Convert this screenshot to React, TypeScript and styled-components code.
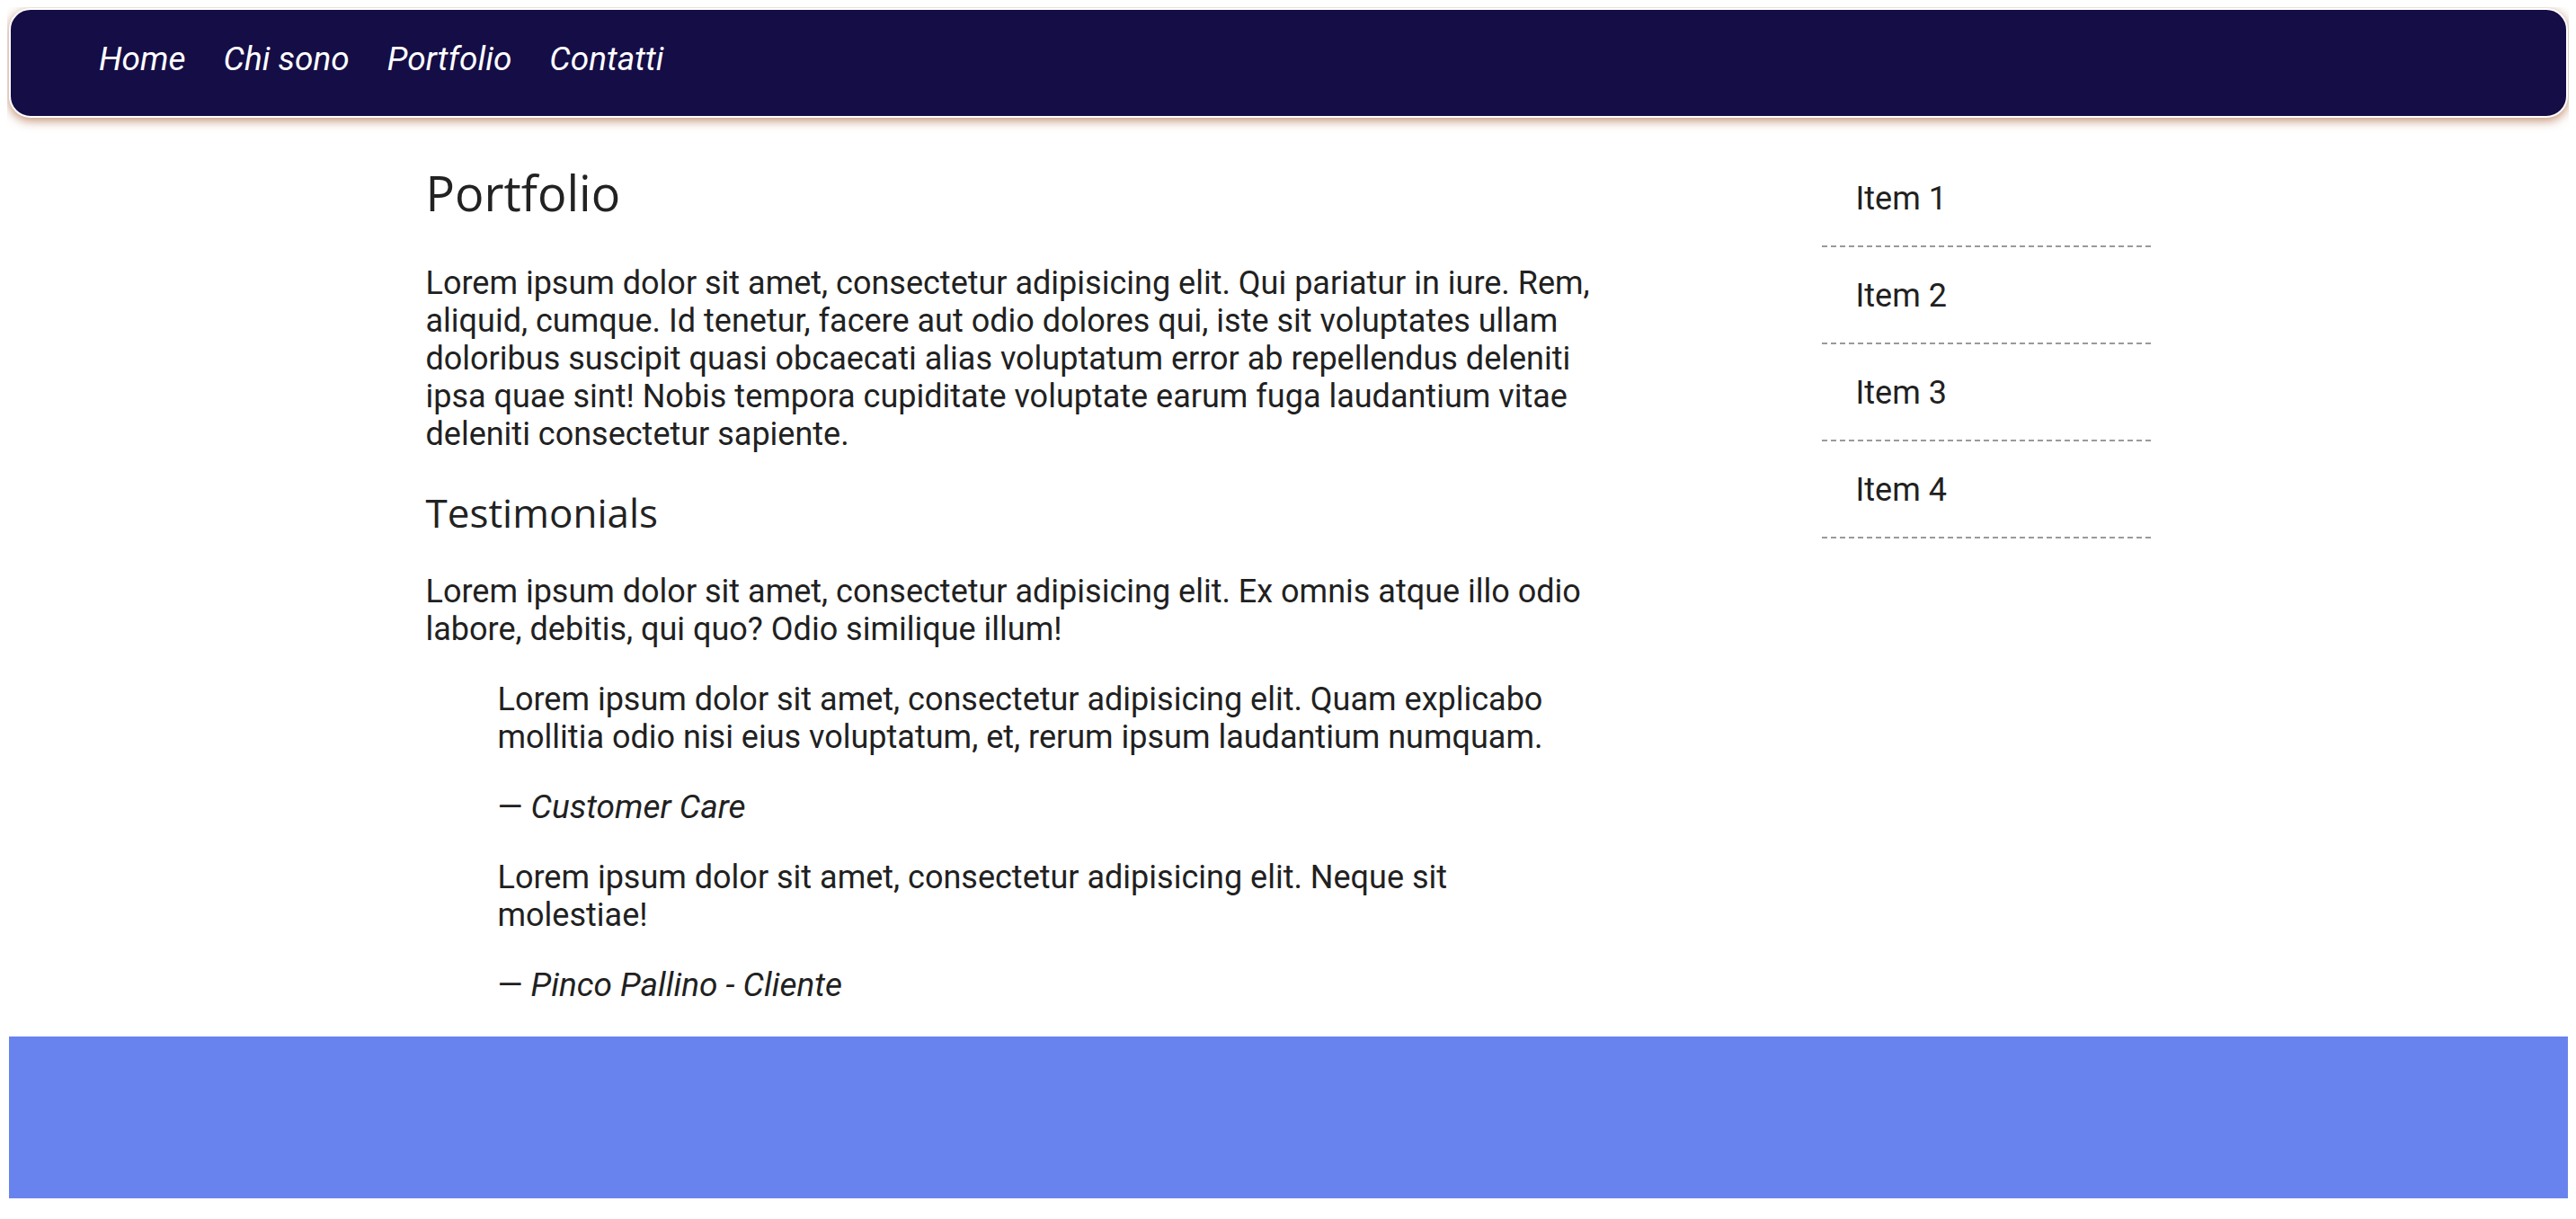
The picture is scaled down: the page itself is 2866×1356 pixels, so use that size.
import React from 'react';
import styled, { createGlobalStyle } from 'styled-components';

const GlobalStyle = createGlobalStyle`
  * { box-sizing: border-box; }
  html, body { padding: 0; background: #ffffff; }
  body {
    margin: 8px 8px 0;
    font-family: Roboto, "Liberation Sans", sans-serif;
    color: #212121;
  }
`;

const NavBar = styled.nav`
  margin: 1px 1px 0 2px;
  height: 122px;
  background: #150d46;
  border: 2px solid #ffffff;
  border-radius: 24px;
  box-shadow: 0 3px 12px rgba(170, 100, 60, 0.75);
`;

const NavList = styled.ul`
  display: flex;
  gap: 42px;
  list-style: none;
  margin: 0;
  padding: 33px 0 0 98px;
`;

const NavLink = styled.a`
  display: block;
  color: #ffffff;
  font-style: italic;
  font-size: 37px;
  line-height: 43px;
  text-decoration: none;
`;

const Container = styled.div`
  width: 1919px;
  margin: 0 auto;
  display: grid;
  grid-template-columns: 1330px 366px;
  justify-content: space-between;
  align-items: start;
`;

const Main = styled.main`
  display: block;
`;

const Title = styled.h1`
  font-family: "Open Sans", "Noto Sans", sans-serif;
  font-weight: 400;
  font-size: 54px;
  line-height: normal;
  color: #222222;
  margin: 46px 0 43px;
`;

const Subtitle = styled.h2`
  font-family: "Open Sans", "Noto Sans", sans-serif;
  font-weight: 400;
  font-size: 44px;
  line-height: normal;
  color: #222222;
  margin: 0 0 37px;
`;

const Text = styled.p`
  font-size: 36px;
  line-height: normal;
  margin: 0 0 36px;
`;

const Quote = styled.blockquote`
  margin: 0 40px 0 80px;
`;

const Source = styled.p`
  font-size: 36px;
  line-height: 42px;
  margin: 0 0 36px;
`;

const Cite = styled.cite`
  font-style: italic;
  font-size: 37px;
`;

const SideList = styled.ul`
  list-style: none;
  margin: 36px 0 0;
  padding: 0;
`;

const SideItem = styled.li`
  font-size: 36px;
  line-height: 42px;
  padding: 33px 0 31px 38px;
  border-bottom: 2px dashed #9a9a9a;
`;

const Footer = styled.footer`
  position: relative;
  margin: 0 1px 0 2px;
  height: 180px;
  background: #6983ee;

  &::after {
    content: "";
    position: absolute;
    left: 0;
    right: 0;
    top: 100%;
    height: 21px;
    background: radial-gradient(
      ellipse 1150px 36px at 52% 100%,
      rgba(0, 0, 0, 0.09) 0%,
      rgba(0, 0, 0, 0.04) 60%,
      rgba(0, 0, 0, 0) 100%
    );
  }
`;

const navItems = ['Home', 'Chi sono', 'Portfolio', 'Contatti'];
const sideItems = ['Item 1', 'Item 2', 'Item 3', 'Item 4'];

const testimonials = [
  {
    text: 'Lorem ipsum dolor sit amet, consectetur adipisicing elit. Quam explicabo mollitia odio nisi eius voluptatum, et, rerum ipsum laudantium numquam.',
    source: 'Customer Care',
  },
  {
    text: 'Lorem ipsum dolor sit amet, consectetur adipisicing elit. Neque sit molestiae!',
    source: 'Pinco Pallino - Cliente',
  },
];

export default function App() {
  return (
    <>
      <GlobalStyle />
      <NavBar>
        <NavList>
          {navItems.map((item) => (
            <li key={item}>
              <NavLink href="#">{item}</NavLink>
            </li>
          ))}
        </NavList>
      </NavBar>
      <Container>
        <Main>
          <Title>Portfolio</Title>
          <Text>
            Lorem ipsum dolor sit amet, consectetur adipisicing elit. Qui pariatur in iure. Rem, aliquid, cumque. Id
            tenetur, facere aut odio dolores qui, iste sit voluptates ullam doloribus suscipit quasi obcaecati alias
            voluptatum error ab repellendus deleniti ipsa quae sint! Nobis tempora cupiditate voluptate earum fuga
            laudantium vitae deleniti consectetur sapiente.
          </Text>
          <Subtitle>Testimonials</Subtitle>
          <Text>
            Lorem ipsum dolor sit amet, consectetur adipisicing elit. Ex omnis atque illo odio labore, debitis, qui quo?
            Odio similique illum!
          </Text>
          {testimonials.map((t) => (
            <Quote key={t.source}>
              <Text>{t.text}</Text>
              <Source>
                {'\u2014\u00a0'}
                <Cite>{t.source}</Cite>
              </Source>
            </Quote>
          ))}
        </Main>
        <aside>
          <SideList>
            {sideItems.map((item) => (
              <SideItem key={item}>{item}</SideItem>
            ))}
          </SideList>
        </aside>
      </Container>
      <Footer />
    </>
  );
}
